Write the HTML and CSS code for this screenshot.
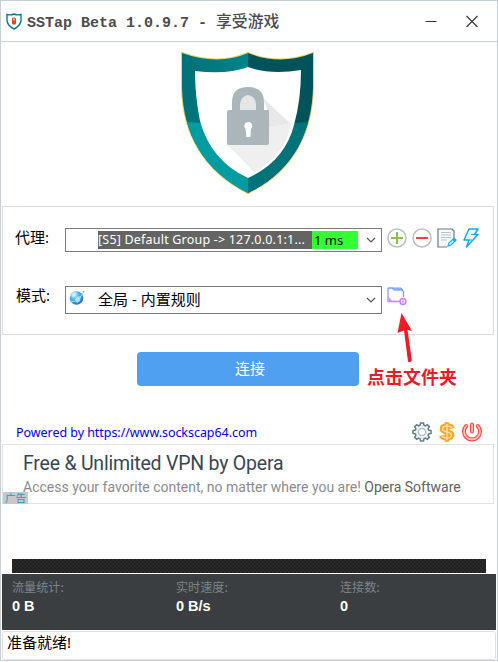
FILE: index.html
```html
<!DOCTYPE html>
<html lang="zh-CN">
<head>
<meta charset="utf-8">
<title>SSTap Beta 1.0.9.7 - 享受游戏</title>
<link rel="stylesheet" href="styles.css">
</head>
<body>
<div class="window">
  <header class="titlebar">
    <svg class="app-icon" width="16" height="17" viewBox="0 0 16 17"><path d="M1 1.5 Q5 2.5 8 1 Q11 2.5 15 1.5 V8 Q14 13 8 16 Q2 13 1 8Z" fill="#fff" stroke="#087c85" stroke-width="1.4"/><rect x="6" y="4.5" width="4" height="7" rx="1.5" fill="#e8401c"/><rect x="7" y="5.5" width="2" height="2" fill="#ffb39a"/></svg>
    <h1 class="title">SSTap Beta 1.0.9.7 - <span class="title-cjk">享受游戏</span></h1>
    <svg class="controls" width="56" height="14" viewBox="0 0 56 14" fill="none" stroke="#333" stroke-width="1.1"><path d="M0.5 7.5H11.5M41.5 2L52.5 13M52.5 2L41.5 13"/></svg>
  </header>

  <section class="hero">
    <svg width="136" height="142" viewBox="0 0 136 142">
      <defs>
        <linearGradient id="left" x1="0" y1="0" x2="1" y2="0"><stop offset="0" stop-color="#006f76"/><stop offset="1" stop-color="#00858b"/></linearGradient>
        <clipPath id="shield"><path d="M2 1 Q38 14 68 1 Q100 14 133 1 V35 C132 82 112 120 68 141 C24 119 3 82 2 36Z"/></clipPath>
      </defs>
      <path d="M2 1 Q38 14 68 1 Q100 14 133 1 V35 C132 82 112 120 68 141 C24 119 3 82 2 36Z" fill="none" stroke="#e6d36c" stroke-width="2"/>
      <g clip-path="url(#shield)">
        <rect width="68" height="142" fill="url(#left)"/>
        <rect x="68" width="68" height="142" fill="#005359"/>
        <path d="M0 69L68 76V142H0Z" fill="#009ca2"/>
        <path d="M68 76L136 69V142H68Z" fill="#007279"/>
      </g>
      <path d="M15 19 Q47 23 68 15 Q90 23 121 18 Q121 48 114 73 Q105 109 68 126 Q31 109 20 69 Q15 44 15 19Z" fill="#fff"/>
      <path d="M83 46L111 72Q104 103 76 119L47 93L88 60Z" fill="#e8e8e9"/>
      <path d="M47 92L89 75L111 71Q103 105 74 120Z" fill="#efefef"/>
      <path d="M57 60V52Q59 43 68 43Q76 43 77 52V60Z" fill="#e5e6e6"/>
      <path d="M52 58V50Q52 35 68 35Q84 35 84 50V58H89V91Q89 93 87 93H49Q47 93 47 91V60Q47 58 49 58ZM60 58H76V52Q75 44 68 43Q61 44 60 52Z" fill="#aab6ba" fill-rule="evenodd"/>
      <path d="M68 70a4 4 0 0 1 3 7l-.6 8h-4l-.8-8a4 4 0 0 1 2.4-7Z" fill="#fff"/>
    </svg>
  </section>

  <section class="settings">
    <div class="row proxy-row">
      <label class="label">代理:</label>
      <div class="select proxy"><span class="proxy-name">[S5] Default Group -&gt; 127.0.0.1:1...</span><span class="ping">1 ms</span><svg class="chev" width="10" height="6" viewBox="0 0 10 6"><path d="M1 1L5 5L9 1"/></svg></div>
      <div class="tools">
        <svg width="20" height="20" viewBox="0 0 20 20"><circle cx="10" cy="10" r="9" fill="#fff" stroke="#b6c2c8" stroke-width="1.5"/><path d="M4 10H16M10 4V16" stroke="#8bc34a" stroke-width="2"/></svg>
        <svg width="20" height="20" viewBox="0 0 20 20"><circle cx="10" cy="10" r="9" fill="#fff" stroke="#b6c2c8" stroke-width="1.5"/><path d="M4 10H16" stroke="#f44336" stroke-width="2"/></svg>
        <svg width="20" height="20" viewBox="0 0 20 20" fill="none"><path d="M10 19H1V1H15L17 3V10" fill="#f6fafb" stroke="#607d8b" stroke-width="1.2"/><path d="M4 4.5H14M4 7H14M4 9.5H14M4 12H10" stroke="#b9c4ca"/><path d="M11 18L12 15L17 10L19 12L14 17Z" fill="#dff4ff" stroke="#16a9f3" stroke-width="1.2"/><path d="M16 11L18.5 13.5" stroke="#16a9f3" stroke-width="2"/></svg>
        <svg class="bolt" width="16" height="20" viewBox="0 0 16 20"><path d="M6 1H15L11.5 6.5H15L3.5 19L6 12H1Z" fill="#effaff" stroke="#16a9f3" stroke-width="1.5" stroke-linejoin="round"/><path d="M11 6.5H8M6 12H9" stroke="#16a9f3"/></svg>
      </div>
    </div>
    <div class="row mode-row">
      <label class="label label-mode">模式:</label>
      <div class="select mode">
        <svg class="globe" width="16" height="16" viewBox="0 0 16 16"><defs><radialGradient id="sea" cx=".35" cy=".3" r=".8"><stop offset="0" stop-color="#bcecff"/><stop offset=".5" stop-color="#39a9e8"/><stop offset="1" stop-color="#126bb8"/></radialGradient></defs><circle cx="7.5" cy="8" r="6.8" fill="url(#sea)"/><path d="M2 5Q5 1 8 3L6 6L3 7ZM8 7L12 6L11 11L8 13L6 10Z" fill="#ddf6ff" opacity=".7"/><path d="M1 11Q8 14 14 3" fill="none" stroke="#a9dcf5" stroke-width="1"/><circle cx="14.5" cy="1.8" r=".8" fill="#3a91c9"/></svg>
        <span class="mode-name">全局 - 内置规则</span><svg class="chev" width="10" height="6" viewBox="0 0 10 6"><path d="M1 1L5 5L9 1"/></svg></div>
      <svg class="folder" width="20" height="19" viewBox="0 0 20 19" fill="none"><defs><linearGradient id="violet" x1="0" y1="0" x2="0" y2="1"><stop offset="0" stop-color="#759cff"/><stop offset="1" stop-color="#c77dff"/></linearGradient></defs><path d="M1 1V14.5H13M1 1H5L7 2.5H14L16.5 4.5V10" stroke="url(#violet)" stroke-width="1.3"/><path d="M5 1H14L16 3H7Z" fill="#a9c2ff" stroke="#7199ff"/><path d="M1 9V14.5H6Z" fill="#c9a0ff"/><circle cx="16" cy="14.5" r="3" fill="#f3e3ff" stroke="#c77dff" stroke-width="1.4"/><circle cx="16" cy="14.5" r="1" fill="#c77dff"/></svg>
    </div>
  </section>

  <section class="action">
    <button class="connect">连接</button>
    <div class="callout">
      <svg width="18" height="52" viewBox="0 0 18 52"><path d="M4.5 0L15 18L10.5 16.8L14.8 47Q14.5 50 11 48.5L7 17.5L.5 20Z" fill="#ed1c24"/></svg>
      <span>点击文件夹</span>
    </div>
  </section>

  <section class="links">
    <a class="powered">Powered by https://www.sockscap64.com</a>
    <div class="link-icons">
      <svg width="20" height="20" viewBox="0 0 20 20" fill="none"><path d="M8 3.3L8.5 1H11.5L12 3.3L13.3 3.9L15.3 2.6L17.4 4.7L16.1 6.7L16.7 8L19 8.5V11.5L16.7 12L16.1 13.3L17.4 15.3L15.3 17.4L13.3 16.1L12 16.7L11.5 19H8.5L8 16.7L6.7 16.1L4.7 17.4L2.6 15.3L3.9 13.3L3.3 12L1 11.5V8.5L3.3 8L3.9 6.7L2.6 4.7L4.7 2.6L6.7 3.9Z" fill="#edf2f4" stroke="#607d8b" stroke-width="1.5"/><circle cx="10" cy="10" r="3.6" fill="#fff" stroke="#b3c0c7" stroke-width="1.5"/></svg>
      <svg width="16" height="20" viewBox="0 0 16 20" fill="none"><path d="M8 .3V19.7M13.5 6.5Q13 4 8 4Q3 4 3 7Q3 9.4 8 10Q13 10.6 13 13Q13 16 8 16Q3 16 2.5 13.5" stroke="#ffa51f" stroke-width="4.8"/><path d="M8 2V18M13 6.2Q12 4 8 4Q3.5 4 3.5 7Q3.5 9 8 10Q12.5 11 12.5 13Q12.5 16 8 16Q4 16 3 13.8" stroke="#ffe1aa" stroke-width="1.4"/></svg>
      <svg width="20" height="20" viewBox="0 0 20 20" fill="none" stroke-linecap="round"><path d="M4.2 4A8 8 0 1 0 15.8 4M10 2.5V9.5" stroke="#f44c43" stroke-width="4"/><path d="M4.2 4A8 8 0 1 0 15.8 4M10 2.5V9.5" stroke="#ffc2bd" stroke-width="1.8"/></svg>
    </div>
  </section>

  <section class="ad">
    <h2 class="ad-title">Free &amp; Unlimited VPN by Opera</h2>
    <p class="ad-text">Access your favorite content, no matter where you are! <span>Opera Software</span></p>
    <span class="ad-tag">广告</span>
  </section>

  <div class="graph"></div>
  <section class="stats">
    <div><span class="stat-label">流量统计:</span><b>0 B</b></div>
    <div><span class="stat-label">实时速度:</span><b>0 B/s</b></div>
    <div><span class="stat-label">连接数:</span><b>0</b></div>
  </section>
  <footer class="status">准备就绪!</footer>
</div>
</body>
</html>
```
FILE: styles.css
```css
* { box-sizing: border-box; }
body { margin: 0; background: #fff; font-family: "Noto Sans", "Noto Sans CJK SC", sans-serif; color: #000; }
svg { display: block; flex: none; }
.window { width: 498px; height: 661px; border: 1px solid #c5d0d8; display: flex; flex-direction: column; overflow: hidden; }
.titlebar { height: 41px; flex: none; border-bottom: 1px solid #c5d0d8; display: flex; align-items: center; padding: 0 18px 0 5px; }
.title { margin: 3px 0 0 5px; font: bold 15px/20px "Liberation Mono", "Noto Sans CJK SC", monospace; color: #4c4c4c; white-space: pre; flex: 1; }
.title-cjk { font: 500 15.8px/20px "Noto Sans CJK SC", sans-serif; }
.controls { margin-right: -2px; }
.hero { height: 164px; flex: none; padding: 10px 0 0 179px; }
.settings { height: 129px; width: 492px; margin-left: 1px; flex: none; border: 1px solid #dcdcdc; padding: 21px 0 0 12px; }
.row { display: flex; align-items: flex-start; }
.label { width: 50px; font-size: 15px; line-height: 20px; margin-top: -1px; }
.label-mode { padding-left: 1px; }
.select { width: 317px; border: 1px solid #7a7a7a; display: flex; align-items: center; position: relative; white-space: nowrap; }
.proxy { height: 24px; padding-left: 32px; font-size: 12.5px; line-height: 18px; }
.proxy-name { width: 214px; background: #646464; color: #fff; overflow: hidden; letter-spacing: .2px; }
.ping { width: 46px; background: #33ff33; padding-left: 2px; font-size: 13px; }
.chev { margin-left: auto; margin-right: 5px; fill: none; stroke: #555; stroke-width: 1.2; }
.tools { display: flex; gap: 5px; margin-left: 5px; }
.bolt { margin-left: 1px; }
.mode-row { margin-top: 34px; }
.mode { height: 28px; padding-left: 3px; font-size: 15px; }
.mode-name { margin-top: -3px; }
.globe { margin: -5px 13px 0 0; }
.folder { margin: 1px 0 0 5px; }
.action { height: 85px; flex: none; padding: 17px 0 0 136px; position: relative; }
.connect { display: block; width: 222px; height: 34px; border: 0; border-radius: 4px; background: #50a0f2; color: #fff; font: 15px "Noto Sans CJK SC", sans-serif; padding: 0 0 4px 4px; }
.callout { position: absolute; left: 366px; top: -22px; color: #ed1c24; font: bold 18px/22px "Noto Sans CJK SC", sans-serif; }
.callout svg { margin-left: 30px; }
.links { height: 24px; flex: none; display: flex; justify-content: space-between; align-items: flex-start; padding: 2px 15px 0 15px; }
.powered { color: #0000e6; font-size: 12.5px; line-height: 20px; letter-spacing: -.05px; margin-top: 1px; }
.link-icons { display: flex; gap: 7px; }
.ad { width: 492px; height: 60px; margin-left: 1px; flex: none; border: 1px solid #e2e2e2; padding: 6px 0 0 20px; font-family: Roboto, sans-serif; position: relative; white-space: nowrap; }
.ad-title { margin: 0; font-size: 19.5px; line-height: 25px; letter-spacing: -.22px; font-weight: 400; color: #37474f; }
.ad-text { margin: 2px 0 0; font-size: 14px; line-height: 18px; color: #8b8b8b; }
.ad-text span { color: #616161; }
.ad-tag { position: absolute; left: 0; bottom: -1px; width: 25px; height: 12px; background: #c8c8c8; color: #00a9bd; font: 10.5px/12px "Noto Sans CJK SC", sans-serif; padding-left: 2px; }
.graph { flex: none; height: 14px; margin: 55px 11px 0 11px; background: repeating-conic-gradient(#202020 0 25%, #2a2a2a 0 50%) 0 0 / 4px 4px; }
.stats { flex: none; height: 56px; margin: 1px 1px 0 1px; background: #3b3e40; display: grid; grid-template-columns: 164px 164px 1fr; padding: 4px 0 0 10px; color: #fff; }
.stat-label { display: block; font: 12.1px/18px "Noto Sans CJK SC", sans-serif; color: #7b8588; }
.stats b { display: block; font: bold 14.5px/21px "Liberation Sans", sans-serif; }
.status { flex: 1; margin: 1px 1px 0 1px; border: 1px solid #ebdcdc; border-radius: 3px; padding: 0 0 0 4px; font-size: 15px; line-height: 20px; }
```
